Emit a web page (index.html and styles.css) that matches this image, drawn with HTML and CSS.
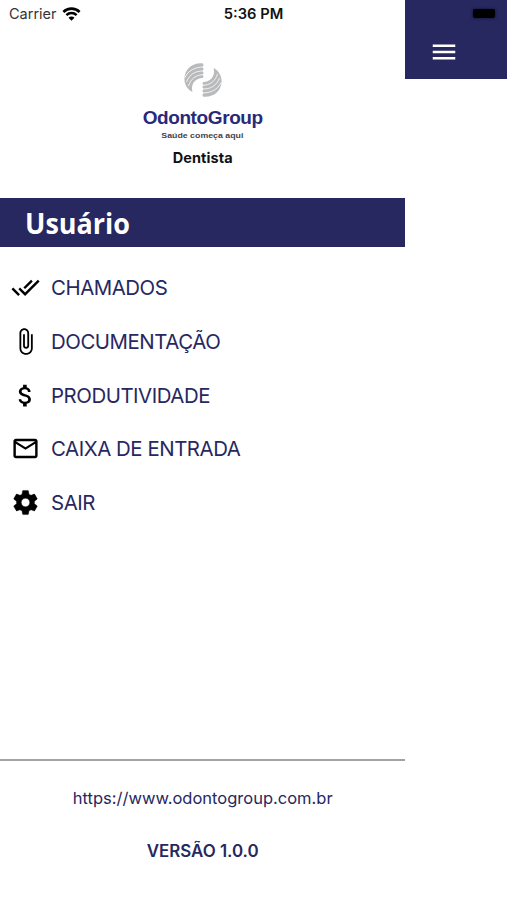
FILE: index.html
```html
<!DOCTYPE html>
<html lang="pt-BR">
<head>
    <meta charset="UTF-8">
    <meta name="viewport" content="width=device-width, initial-scale=1.0">
    <title>OdontoGroup Dentista</title>
    <link rel="stylesheet" href="styles.css">
</head>
<body>

<!-- Barra de status -->
<div class="status-bar">
    <div class="carrier">
        <span>Carrier</span>
        <svg class="wifi" viewBox="0 0 18 14">
            <path d="M.9 5a11.500 11.500 0 0 1 16.200 0" fill="none" stroke="#000" stroke-width="2.600"/>
            <path d="M3.900 8.200a7.200 7.200 0 0 1 10.200 0" fill="none" stroke="#000" stroke-width="2.500"/>
            <path d="M9 13.800L6 10.700a4.200 4.200 0 0 1 6 0z"/>
        </svg>
    </div>
    <div class="time">5:36 PM</div>
    <div class="battery"></div>
</div>

<div class="app">
    <!-- Menu lateral -->
    <nav class="drawer">
        <div class="brand">
            <svg class="logo" viewBox="0 0 38 34">
                <g id="swoosh">
                    <path d="M18.500.3C8-.5.4 6.500.4 16C.4 21.500 3.500 26.500 8.500 29C6.500 22 10.500 15.500 18.500 15Q20.500 13.500 18.500 12Q20.500 10 18.500 8Q20.500 6 18.500 4Q20.500 2 18.500.3z" fill="#b9babc"/>
                    <path d="M20 4C11 4 4 7.500 1 14.500M20 8C11 7.500 5 12 2.500 19M20 11.700C12 11.500 6.500 16 4.500 23" fill="none" stroke="#fff" stroke-width=".8"/>
                </g>
                <use href="#swoosh" transform="rotate(180 19 17)"/>
            </svg>
            <div class="brand-name">OdontoGroup</div>
            <div class="slogan">Saúde começa aqui</div>
            <div class="role">Dentista</div>
        </div>

        <div class="section-title"><span>Usuário</span></div>

        <ul class="menu">
            <li>
                <svg viewBox="0 0 24 24"><path d="M18 7l-1.410-1.410-6.340 6.340 1.410 1.410L18 7zm4.240-1.410L11.660 16.170 7.480 12l-1.410 1.410L11.660 19l12-12-1.420-1.410zM.41 13.410L6 19l1.410-1.410L1.830 12 .41 13.410z"/></svg>
                <span>CHAMADOS</span>
            </li>
            <li>
                <svg viewBox="0 0 24 24"><path d="M16.500 6v11.500c0 2.210-1.790 4-4 4s-4-1.790-4-4V5c0-1.380 1.120-2.500 2.500-2.500s2.500 1.120 2.500 2.500v10.500c0 .55-.45 1-1 1s-1-.45-1-1V6H10v9.500c0 1.380 1.120 2.500 2.500 2.500s2.500-1.120 2.500-2.500V5c0-2.210-1.790-4-4-4S7 2.790 7 5v12.500c0 3.040 2.460 5.500 5.500 5.500s5.500-2.460 5.500-5.500V6h-1.500z"/></svg>
                <span>DOCUMENTAÇÃO</span>
            </li>
            <li>
                <svg viewBox="0 0 24 24"><path d="M11.800 10.900c-2.270-.59-3-1.200-3-2.150 0-1.090 1.010-1.850 2.700-1.850 1.780 0 2.440.85 2.500 2.100h2.210c-.07-1.720-1.120-3.300-3.210-3.810V3h-3v2.160c-1.940.42-3.500 1.680-3.500 3.610 0 2.310 1.910 3.460 4.700 4.130 2.500.6 3 1.480 3 2.410 0 .69-.49 1.790-2.700 1.790-2.060 0-2.870-.92-2.980-2.100h-2.200c.12 2.190 1.760 3.420 3.680 3.830V21h3v-2.150c1.950-.37 3.500-1.500 3.500-3.550 0-2.840-2.430-3.810-4.700-4.400z"/></svg>
                <span>PRODUTIVIDADE</span>
            </li>
            <li>
                <svg viewBox="0 0 24 24"><path d="M20 4H4c-1.100 0-1.990.9-1.990 2L2 18c0 1.100.9 2 2 2h16c1.100 0 2-.9 2-2V6c0-1.100-.9-2-2-2zm0 14H4V8l8 5 8-5v10zm-8-7L4 6h16l-8 5z"/></svg>
                <span>CAIXA DE ENTRADA</span>
            </li>
            <li>
                <svg viewBox="0 0 24 24"><path d="M19.430 12.980c.04-.32.07-.64.07-.98s-.03-.66-.07-.98l2.110-1.650c.19-.15.24-.42.12-.64l-2-3.460c-.12-.22-.39-.3-.61-.22l-2.490 1c-.52-.4-1.080-.73-1.690-.98l-.38-2.650C14.460 2.180 14.250 2 14 2h-4c-.25 0-.46.18-.49.42l-.38 2.650c-.61.25-1.170.59-1.690.98l-2.490-1c-.23-.09-.49 0-.61.22l-2 3.460c-.13.22-.07.49.12.64l2.110 1.650c-.04.32-.07.65-.07.98s.03.66.07.98l-2.110 1.650c-.19.15-.24.42-.12.64l2 3.460c.12.22.39.3.61.22l2.490-1c.52.4 1.080.73 1.690.98l.38 2.650c.03.24.24.42.49.42h4c.25 0 .46-.18.49-.42l.38-2.650c.61-.25 1.170-.59 1.690-.98l2.490 1c.23.09.49 0 .61-.22l2-3.460c.12-.22.07-.49-.12-.64l-2.110-1.650zM12 15.500c-1.930 0-3.500-1.570-3.500-3.500s1.570-3.500 3.500-3.500 3.500 1.570 3.500 3.500-1.570 3.500-3.500 3.500z" stroke="#000" stroke-width=".3"/></svg>
                <span>SAIR</span>
            </li>
        </ul>

        <footer>
            <div class="site">https://www.odontogroup.com.br</div>
            <div class="version">VERSÃO 1.0.0</div>
        </footer>
    </nav>

    <!-- Tela atrás do menu -->
    <header class="top-bar">
        <svg viewBox="0 0 24 24"><path d="M3 18h18v-2H3v2zm0-5h18v-2H3v2zm0-7v2h18V6H3z"/></svg>
    </header>
</div>

</body>
</html>
```
FILE: styles.css
```css
body {
    font-family: Inter, "Liberation Sans", sans-serif;
    background-color: #fff;
    color: #272860;
    margin: 0;
    padding: 0;
}

.status-bar {
    position: absolute;
    top: 0;
    left: 0;
    right: 0;
    height: 27px;
    display: grid;
    grid-template-columns: 1fr auto 1fr;
    align-items: center;
    padding: 0 10px 0 9px;
    color: #111;
    font-size: 14.5px;
}

.carrier {
    display: flex;
    align-items: center;
    gap: 5px;
    color: #333;
}

.wifi {
    width: 19px;
    height: 14px;
}

.time {
    padding-left: 1px;
    font-size: 14.7px;
    font-weight: 600;
}

.battery {
    justify-self: end;
    width: 22px;
    height: 9px;
    margin-right: 2px;
    border-radius: 2px;
    background-color: #000;
    box-shadow: 0 0 2px 1px #1b1c45;
}

.app {
    display: flex;
    align-items: flex-start;
    height: 900px;
}

.drawer {
    width: 405.4px;
    height: 900px;
    display: flex;
    flex-direction: column;
    background-color: #fff;
}

.brand {
    height: 198px;
    box-sizing: border-box;
    padding-top: 63px;
    display: flex;
    flex-direction: column;
    align-items: center;
}

.logo {
    width: 38px;
    height: 34px;
}

.brand-name {
    margin-top: 10px;
    font-family: "Liberation Sans", Arial, sans-serif;
    font-size: 19px;
    line-height: 22px;
    font-weight: bold;
    letter-spacing: -0.4px;
    color: #29297a;
}

.slogan {
    margin-top: 1px;
    font-family: "Liberation Sans", Arial, sans-serif;
    font-size: 8px;
    line-height: 12px;
    font-weight: bold;
    color: #444;
    transform: scaleX(1.1);
}

.role {
    margin-top: 7px;
    font-size: 14.5px;
    line-height: 18px;
    font-weight: 700;
    letter-spacing: 0.1px;
    color: #111;
}

.section-title {
    height: 49px;
    padding-left: 25px;
    background-color: #272860;
    color: #fff;
    font-family: "Open Sans", "Noto Sans", sans-serif;
    font-size: 29px;
    line-height: 49px;
    font-weight: bold;
}

.section-title span {
    display: inline-block;
    transform: scaleX(0.93);
    transform-origin: left;
}

.menu {
    list-style: none;
    margin: 0;
    padding: 14px 0 0 11px;
    flex: 1;
}

.menu li {
    display: flex;
    align-items: center;
    gap: 11px;
    height: 53.7px;
    font-size: 20.4px;
    letter-spacing: -0.45px;
}

.menu svg {
    width: 29px;
    height: 29px;
    fill: #000;
}

footer {
    height: 141px;
    box-sizing: border-box;
    border-top: 2px solid #a3a3a3;
    padding-top: 26px;
    text-align: center;
    font-size: 16.5px;
    line-height: 22px;
}

.version {
    margin-top: 31px;
    font-size: 16.9px;
    font-weight: 600;
}

.top-bar {
    flex: 1;
    height: 79px;
    box-sizing: border-box;
    padding: 37px 0 0 24px;
    background-color: #272860;
}

.top-bar svg {
    display: block;
    width: 30px;
    height: 30px;
    fill: #fff;
}
```
